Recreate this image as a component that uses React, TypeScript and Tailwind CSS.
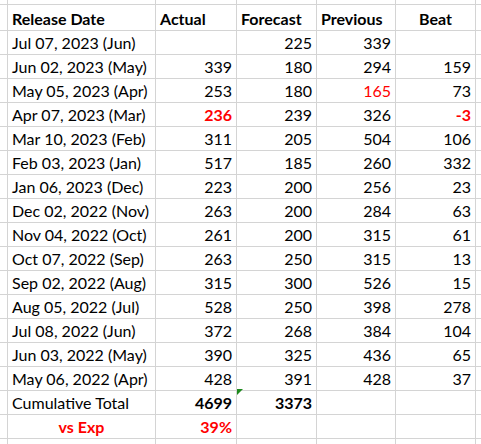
const rows: [string, string, string, string, string][] = [
  ['Jul 07, 2023 (Jun)', '', '225', '339', ''],
  ['Jun 02, 2023 (May)', '339', '180', '294', '159'],
  ['May 05, 2023 (Apr)', '253', '180', '165', '73'],
  ['Apr 07, 2023 (Mar)', '236', '239', '326', '-3'],
  ['Mar 10, 2023 (Feb)', '311', '205', '504', '106'],
  ['Feb 03, 2023 (Jan)', '517', '185', '260', '332'],
  ['Jan 06, 2023 (Dec)', '223', '200', '256', '23'],
  ['Dec 02, 2022 (Nov)', '263', '200', '284', '63'],
  ['Nov 04, 2022 (Oct)', '261', '200', '315', '61'],
  ['Oct 07, 2022 (Sep)', '263', '250', '315', '13'],
  ['Sep 02, 2022 (Aug)', '315', '300', '526', '15'],
  ['Aug 05, 2022 (Jul)', '528', '250', '398', '278'],
  ['Jul 08, 2022 (Jun)', '372', '268', '384', '104'],
  ['Jun 03, 2022 (May)', '390', '325', '436', '65'],
  ['May 06, 2022 (Apr)', '428', '391', '428', '37'],
]

// cells that are styled red in the sheet: "row-col"
const redBold = new Set(['3-1', '3-4'])
const redPlain = new Set(['2-3'])

const grid = 'grid grid-cols-[8px_148px_81px_80px_79px_80px_1fr]'
const cell = 'border-r border-b border-[#d4d4d4] flex items-end px-[4px] pb-[2px] leading-[19px] whitespace-nowrap'

function Row({ cells, h, cls = [] }: { cells: React.ReactNode[]; h: string; cls?: string[] }) {
  return (
    <div className={`${grid} ${h}`}>
      <div className="border-r border-b border-[#d4d4d4]" />
      {cells.map((c, i) => (
        <div key={i} className={`${cell} ${cls[i] ?? (i === 0 ? 'justify-start' : 'justify-end')}`}>
          {c}
        </div>
      ))}
      <div className="border-b border-[#d4d4d4]" />
    </div>
  )
}

export default function App() {
  return (
    <div className="w-[481px] h-[444px] overflow-hidden bg-white text-black text-[16px] font-['Lato',sans-serif]">
      <div className={`${grid} h-[5px]`}>
        <div className="border-r border-b border-[#d4d4d4]" />
        {[0, 1, 2, 3, 4].map((i) => (
          <div key={i} className="border-r border-b border-[#d4d4d4]" />
        ))}
        <div className="border-b border-[#d4d4d4]" />
      </div>

      <Row
        h="h-[26px]"
        cells={[
          <b>Release Date</b>,
          <b>Actual</b>,
          <b>Forecast</b>,
          <b>Previous</b>,
          <b>Beat</b>,
        ]}
        cls={['justify-start', 'justify-start', 'justify-start', 'justify-start', 'justify-center']}
      />

      {rows.map((r, ri) => (
        <Row
          key={ri}
          h="h-[24px]"
          cells={r.map((v, ci) => {
            const k = `${ri}-${ci}`
            if (redBold.has(k)) return <span className="font-bold text-[#ff0000]">{v}</span>
            if (redPlain.has(k)) return <span className="text-[#ff0000]">{v}</span>
            return v
          })}
        />
      ))}

      <Row
        h="h-[24px]"
        cells={[
          'Cumulative Total',
          <b>4699</b>,
          <div className="relative w-full h-full flex items-end justify-end">
            <span className="absolute -left-[4px] -top-[2px] w-0 h-0 border-t-[6px] border-r-[6px] border-t-[#1e8a1e] border-r-transparent" />
            <b>3373</b>
          </div>,
          '',
          '',
        ]}
      />

      <Row
        h="h-[24px]"
        cells={[
          <span className="font-bold text-[#ff0000]">vs Exp</span>,
          <span className="font-bold text-[#ff0000]">39%</span>,
          '',
          '',
          '',
        ]}
        cls={['justify-center']}
      />

      <div className={`${grid} h-[6px]`}>
        <div className="border-r border-[#d4d4d4]" />
        {[0, 1, 2, 3, 4].map((i) => (
          <div key={i} className="border-r border-[#d4d4d4]" />
        ))}
        <div />
      </div>
    </div>
  )
}
